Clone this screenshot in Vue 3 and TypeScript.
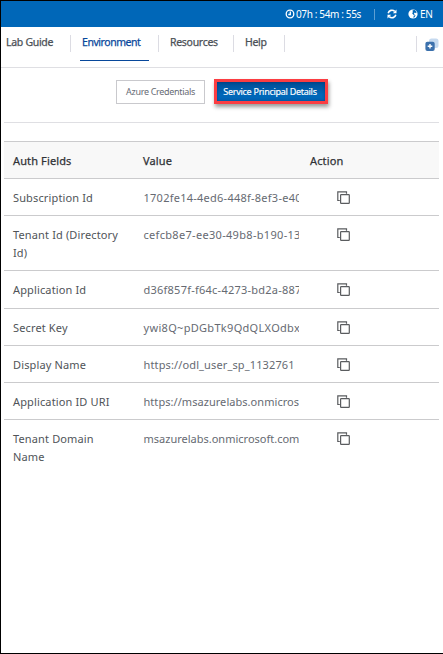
<script setup lang="ts">
interface Field {
  label: string
  value: string
  height: number
  tracking: number
}

const fields: Field[] = [
  { label: 'Subscription Id', value: '1702fe14-4ed6-448f-8ef3-e40', height: 37, tracking: 0.25 },
  { label: 'Tenant Id (Directory Id)', value: 'cefcb8e7-ee30-49b8-b190-13', height: 55, tracking: 0.31 },
  { label: 'Application Id', value: 'd36f857f-f64c-4273-bd2a-887', height: 38, tracking: 0.24 },
  { label: 'Secret Key', value: 'ywi8Q~pDGbTk9QdQLXOdbx', height: 37, tracking: 0.31 },
  { label: 'Display Name', value: 'https://odl_user_sp_1132761', height: 37, tracking: 0.13 },
  { label: 'Application ID URI', value: 'https://msazurelabs.onmicros', height: 37, tracking: 0.05 },
  { label: 'Tenant Domain Name', value: 'msazurelabs.onmicrosoft.com', height: 56, tracking: 0 },
]
</script>

<template>
  <div class="page">
    <header class="topbar">
      <svg class="clock" viewBox="0 0 10 10"><circle cx="5" cy="5" r="3.8" /><path d="M5.3 2.6V5.5H3.3" /></svg>
      <span class="timer">07h : 54m : 55s</span>
      <i class="bar-sep"></i>
      <svg class="refresh" viewBox="0 0 10 10">
        <path d="M1.2 4.2A3.9 3.9 0 0 1 7.7 2.3M8.8 5.8A3.9 3.9 0 0 1 2.3 7.7" />
        <path class="solid" d="M9.5.5v3.7H5.8zM.5 9.5V5.8h3.7z" />
      </svg>
      <svg class="globe" viewBox="0 0 10 10">
        <circle cx="5" cy="5" r="4.6" />
        <path d="M4.6 1.2 6.8 1l1.8 1.9-.5 1.4-1.3-.7-.9.8.9 1.3-1.1.2-1.5-1.4.6-1.2zM5.8 6.5l1.9-.2-1.4 2.3-.9.1z" />
      </svg>
      <span class="lang">EN</span>
    </header>
    <nav class="nav">
      <a class="tab guide"><span>Lab Guide</span></a>
      <a class="tab env active"><span>Environment</span></a>
      <a class="tab res"><span>Resources</span></a>
      <a class="tab help"><span>Help</span></a>
      <div class="tools">
        <svg viewBox="0 0 14 14">
          <rect class="back" x="4" y="0.5" width="9.5" height="9.5" rx="2.5" />
          <rect class="front" x="0.4" y="3.7" width="9.3" height="9.3" rx="2" />
          <path d="M5 6v4.6M2.7 8.3h4.6" />
        </svg>
      </div>
    </nav>
    <div class="switch">
      <button class="btn">Azure Credentials</button>
      <button class="btn chosen">Service Principal Details</button>
    </div>
    <section class="table">
      <div class="row head">
        <span>Auth Fields</span><span>Value</span><span>Action</span>
      </div>
      <div v-for="f in fields" :key="f.label" class="row" :style="{ height: f.height + 'px' }">
        <span class="label">{{ f.label }}</span>
        <span class="value" :style="{ letterSpacing: f.tracking + 'px' }">{{ f.value }}</span>
        <svg class="copy" viewBox="0 0 13 13">
          <path d="M2.8 9.5H.8V.8h8.7v2" />
          <rect x="3.6" y="3.6" width="8.7" height="8.7" rx=".6" />
        </svg>
      </div>
    </section>
  </div>
</template>

<style>
body { margin: 0; }
</style>

<style scoped>
* { box-sizing: border-box; }
.page {
  width: 443px; height: 654px; overflow: hidden; background: #fff;
  border: 1px solid #000; border-right: 0;
  font-family: "Noto Sans", sans-serif; color: #4b5056;
}
.topbar {
  height: 26px; background: #0067b8; color: #fff; display: flex; align-items: center;
  padding-left: 284px; font-size: 10px;
}
.topbar svg { flex: none; width: 10px; height: 10px; }
.clock { fill: none; stroke: #fff; stroke-width: 1.3; }
.timer { width: 78px; margin-left: 1px; white-space: nowrap; letter-spacing: -0.36px; }
.bar-sep { width: 1px; height: 11px; background: #5d9fd3; }
.topbar .refresh { margin-left: 12px; fill: none; stroke: #fff; stroke-width: 1.6; }
.refresh .solid { fill: #fff; stroke: none; }
.topbar .globe { margin-left: 11px; fill: #fff; }
.globe path { fill: #0067b8; }
.lang { margin-left: 2px; letter-spacing: -0.4px; }
.nav { height: 41px; display: flex; border-bottom: 1px solid #dfdfe3; padding: 8px 0 0 5px; }
.tab {
  position: relative; height: 25px; font-size: 10.5px; line-height: 14px; font-weight: 400;
  letter-spacing: -0.3px; white-space: nowrap; -webkit-text-stroke: 0.25px;
}
.tab::after { content: ""; position: absolute; right: 0; top: 0; width: 1px; height: 17px; background: #dcdce3; }
.guide { width: 65px; }
.env { width: 88px; padding-left: 11px; }
.res { width: 75px; padding-left: 11px; }
.help { width: 51px; padding-left: 11px; }
.active { color: #07479b; letter-spacing: -0.45px; }
.active::before { content: ""; position: absolute; left: 9px; top: 25px; width: 69px; height: 1px; background: #07479b; }
.tools { margin: 1px 0 0 131px; height: 16px; border-left: 1px solid #dcdce3; padding: 2px 0 0 8px; }
.tools svg { display: block; width: 14px; height: 14px; }
.back { fill: #c5d9ef; }
.front { fill: #3b70ac; }
.tools path { stroke: #fff; stroke-width: 1.4; }
.switch {
  width: 435px; height: 55px; margin-left: 3px; display: flex; align-items: flex-start;
  padding: 11px 0 0 112px; border-bottom: 1px solid #dfdfe3;
}
.btn {
  width: 89px; height: 24px; margin: 1px 0 0; padding: 0 0 1px; border: 1px solid #c9c9cd; background: #fff;
  color: #666b75; font: 9px "Noto Sans", sans-serif; white-space: nowrap; letter-spacing: -0.32px;
}
.chosen {
  width: 114px; height: 25px; margin: 0 0 0 9px; padding: 0 2px 0 0; border: 3px solid #fb3d42; color: #fff;
  background: linear-gradient(#004c94, #0067b8 65%); letter-spacing: -0.27px;
  box-shadow: 1px 3px 4px rgba(0, 0, 0, .4), inset 0 0 3px rgba(0, 40, 90, .5); -webkit-text-stroke: .15px;
}
.table { margin: 18px 4px 0 3px; width: 435px; border-top: 1px solid #cbcbcd; font-size: 11px; line-height: 18px; }
.row {
  display: grid; grid-template-columns: 130px 167px 1fr; padding: 10px 0 0 9px;
  border-bottom: 1px solid #cbcbcd; white-space: nowrap;
}
.row:last-child { border-bottom: 0; }
.head { height: 37px; background: #f8f8f8; color: #303236; letter-spacing: .13px; -webkit-text-stroke: .25px; }
.label { width: 112px; white-space: normal; color: #505458; letter-spacing: .14px; }
.value { width: 156px; height: 18px; padding-left: .5px; overflow: hidden; color: #666a72; }
.copy { width: 13px; height: 13px; margin: 2px 0 0 27px; fill: none; stroke: #5a5c5f; stroke-width: 1.2; }
</style>
